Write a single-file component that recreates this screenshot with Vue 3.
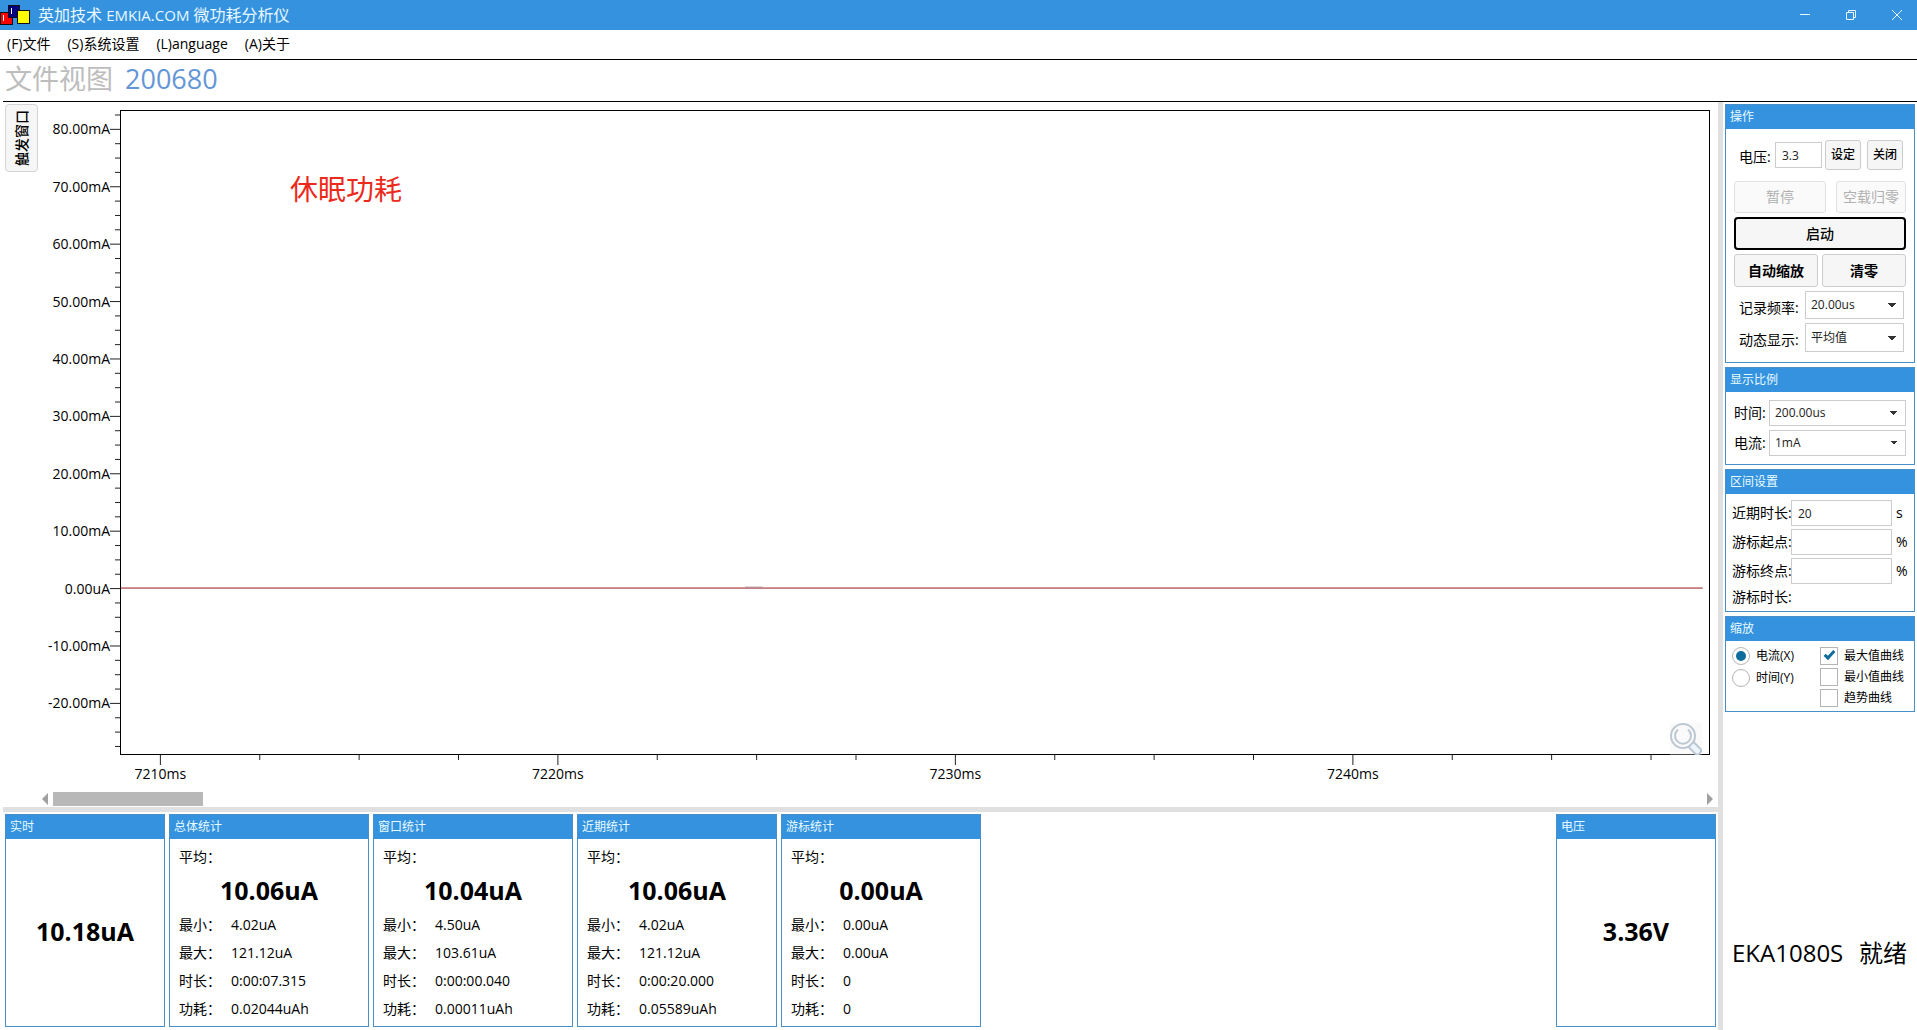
<script setup>
import { ref } from 'vue'

const plotTop = 3
const yStep = 8.9
const yLabels = [
  '80.00mA', '70.00mA', '60.00mA', '50.00mA', '40.00mA', '30.00mA',
  '20.00mA', '10.00mA', '0.00uA', '-10.00mA', '-20.00mA'
]
const yMajor = yLabels.map((label, i) => ({ label, pos: plotTop + i * yStep }))
const yMinor = []
for (let i = -1; i <= 43; i++) {
  if (i % 4 !== 0) yMinor.push(plotTop + (i * yStep) / 4)
}

const xStart = 2.54
const xStep = 6.25
const xMajor = ['7210ms', '7220ms', '7230ms', '7240ms'].map((label, i) => ({
  label,
  pos: xStart + i * xStep * 4
}))
const xMinor = []
for (let i = 1; i < 16; i++) {
  if (i % 4 !== 0) xMinor.push(xStart + i * xStep)
}

const stats = [
  { title: '总体统计', avg: '10.06uA', rows: [['最小：', '4.02uA'], ['最大：', '121.12uA'], ['时长：', '0:00:07.315'], ['功耗：', '0.02044uAh']] },
  { title: '窗口统计', avg: '10.04uA', rows: [['最小：', '4.50uA'], ['最大：', '103.61uA'], ['时长：', '0:00:00.040'], ['功耗：', '0.00011uAh']] },
  { title: '近期统计', avg: '10.06uA', rows: [['最小：', '4.02uA'], ['最大：', '121.12uA'], ['时长：', '0:00:20.000'], ['功耗：', '0.05589uAh']] },
  { title: '游标统计', avg: '0.00uA', rows: [['最小：', '0.00uA'], ['最大：', '0.00uA'], ['时长：', '0'], ['功耗：', '0']] }
]

const voltage = ref('3.3')
const recent = ref('20')
const cursorStart = ref('')
const cursorEnd = ref('')
const axis = ref('x')
const showMax = ref(true)
const showMin = ref(false)
const showTrend = ref(false)
</script>

<template>
  <div class="app">
    <header class="titlebar">
      <svg class="logo" width="31" height="30" viewBox="0 0 31 30">
        <g stroke="#101018" stroke-width="1">
          <rect x="0.5" y="12.5" width="12" height="12" fill="#f00" />
          <rect x="8.5" y="5.5" width="11" height="12" fill="#000080" />
          <rect x="17.5" y="10.5" width="12" height="13" fill="#ff0" />
        </g>
        <path d="M3.5 15v6M11.5 8v6" stroke="#fff" stroke-width="1" />
      </svg>
      <h1>英加技术 <span>EMKIA.COM</span> 微功耗分析仪</h1>
      <div class="winbtns">
        <button aria-label="最小化">
          <svg width="12" height="12" viewBox="0 0 12 12"><path d="M1 5.5h10" /></svg>
        </button>
        <button aria-label="还原">
          <svg width="12" height="12" viewBox="0 0 12 12"><path d="M1.500 3.500h7v7h-7zM3.500 3.500v-2h7v7h-2" /></svg>
        </button>
        <button aria-label="关闭窗口">
          <svg width="12" height="12" viewBox="0 0 12 12"><path d="M1 1l10 10M11 1L1 11" /></svg>
        </button>
      </div>
    </header>

    <nav class="menubar">
      <button>(F)文件</button>
      <button>(S)系统设置</button>
      <button>(L)anguage</button>
      <button>(A)关于</button>
    </nav>

    <div class="viewhead">
      <span>文件视图</span>
      <strong>200680</strong>
    </div>

    <div class="main">
      <div class="left">
        <section class="chart">
          <div class="yaxis">
            <button class="trigger"><span>触发窗口</span></button>
            <svg class="yscale">
              <g v-for="t in yMajor" :key="t.label">
                <text x="68" :y="t.pos + '%'" dy="5" text-anchor="end">{{ t.label }}</text>
                <line x1="68" x2="78" :y1="t.pos + '%'" :y2="t.pos + '%'" />
              </g>
              <line v-for="p in yMinor" :key="p" x1="73" x2="78" :y1="p + '%'" :y2="p + '%'" />
            </svg>
          </div>
          <div class="plot">
            <svg class="trace">
              <line x1="0" x2="99.6%" y1="74.2%" y2="74.2%" class="halo" />
              <line x1="0" x2="99.6%" y1="74.2%" y2="74.2%" class="curve" />
              <line x1="39.300%" x2="40.400%" y1="74.05%" y2="74.05%" class="bump" />
            </svg>
            <span class="note">休眠功耗</span>
            <button class="magnify" aria-label="放大">
              <svg width="32" height="32" viewBox="0 0 32 32" fill="none" stroke="#bcc8d4" stroke-width="2">
                <circle cx="13" cy="13" r="12" />
                <path d="M8 6.500a8 8 0 1 0 10 0" />
                <path d="M18.500 24l5-5 7 7c2 3-2.500 7-5 5z" fill="#eef4fc" />
              </svg>
            </button>
          </div>
          <svg class="xscale">
            <g v-for="t in xMajor" :key="t.label">
              <line :x1="t.pos + '%'" :x2="t.pos + '%'" y1="0" y2="10" />
              <text :x="t.pos + '%'" y="24" text-anchor="middle">{{ t.label }}</text>
            </g>
            <line v-for="p in xMinor" :key="p" :x1="p + '%'" :x2="p + '%'" y1="0" y2="5" />
          </svg>
          <div class="scroll">
            <button aria-label="向左滚动"><svg width="7" height="12" viewBox="0 0 7 12"><path d="M6 0v12L0 6z" /></svg></button>
            <div class="track"><div class="thumb"></div></div>
            <button aria-label="向右滚动"><svg width="7" height="12" viewBox="0 0 7 12"><path d="M0 0v12l6-6z" /></svg></button>
          </div>
        </section>

        <section class="readouts">
          <article class="box single">
            <h2>实时</h2>
            <p class="big">10.18uA</p>
          </article>
          <article v-for="s in stats" :key="s.title" class="box stat">
            <h2>{{ s.title }}</h2>
            <div class="statbody">
              <p class="avg">平均：</p>
              <p class="big">{{ s.avg }}</p>
              <table>
                <tbody>
                  <tr v-for="r in s.rows" :key="r[0]">
                    <th scope="row">{{ r[0] }}</th>
                    <td>{{ r[1] }}</td>
                  </tr>
                </tbody>
              </table>
            </div>
          </article>
          <article class="box single volt">
            <h2>电压</h2>
            <p class="big">3.36V</p>
          </article>
        </section>
      </div>

      <aside class="side">
        <section class="box">
          <h2>操作</h2>
          <div class="ops">
            <div class="row vrow">
              <label for="volt">电压:</label>
              <input id="volt" v-model="voltage" type="text" />
              <button class="btn small">设定</button>
              <button class="btn small off">关闭</button>
            </div>
            <div class="row pause">
              <button class="btn wide" disabled>暂停</button>
              <button class="btn" disabled>空载归零</button>
            </div>
            <button class="btn start">启动</button>
            <div class="row pair">
              <button class="btn">自动缩放</button>
              <button class="btn">清零</button>
            </div>
            <div class="row srow">
              <label for="freq">记录频率:</label>
              <select id="freq"><option>20.00us</option></select>
            </div>
            <div class="row srow">
              <label for="dyn">动态显示:</label>
              <select id="dyn"><option>平均值</option></select>
            </div>
          </div>
        </section>

        <section class="box">
          <h2>显示比例</h2>
          <div class="ratio">
            <div class="row">
              <label for="rt">时间:</label>
              <select id="rt"><option>200.00us</option></select>
            </div>
            <div class="row">
              <label for="rc">电流:</label>
              <select id="rc"><option>1mA</option></select>
            </div>
          </div>
        </section>

        <section class="box">
          <h2>区间设置</h2>
          <div class="range">
            <div class="row">
              <label for="recent">近期时长:</label>
              <input id="recent" v-model="recent" type="text" />
              <span>s</span>
            </div>
            <div class="row">
              <label for="cs">游标起点:</label>
              <input id="cs" v-model="cursorStart" type="text" />
              <span>%</span>
            </div>
            <div class="row">
              <label for="ce">游标终点:</label>
              <input id="ce" v-model="cursorEnd" type="text" />
              <span>%</span>
            </div>
            <p>游标时长:</p>
          </div>
        </section>

        <section class="box">
          <h2>缩放</h2>
          <div class="zoom">
            <div class="col radios">
              <label><input v-model="axis" type="radio" name="axis" value="x" />电流(X)</label>
              <label><input v-model="axis" type="radio" name="axis" value="y" />时间(Y)</label>
            </div>
            <div class="col checks">
              <label><input v-model="showMax" type="checkbox" />最大值曲线</label>
              <label><input v-model="showMin" type="checkbox" />最小值曲线</label>
              <label><input v-model="showTrend" type="checkbox" />趋势曲线</label>
            </div>
          </div>
        </section>

        <p class="status"><span>EKA1080S</span><span>就绪</span></p>
      </aside>
    </div>
  </div>
</template>

<style>
body {
  background: #fff;
}
</style>

<style scoped>
.app {
  display: flex;
  flex-direction: column;
  min-height: 100vh;
  color: #000;
  font: 14px/20px "Open Sans", "Noto Sans CJK SC", sans-serif;
}
.app *,
.app *::before {
  box-sizing: border-box;
}
h1, h2, p {
  margin: 0;
  font-weight: 400;
}
button, input, select {
  margin: 0;
  padding: 0;
  border: 0;
  background: none;
  color: inherit;
  font: inherit;
}

.titlebar {
  display: flex;
  align-items: center;
  height: 30px;
  background: #3492df;
  color: #e8f8ff;
}
.titlebar h1 {
  flex: 1;
  margin-left: 7px;
  font-size: 16px;
  line-height: 28px;
}
.titlebar h1 span {
  font-size: 15px;
}
.winbtns {
  display: flex;
  padding-right: 1px;
}
.winbtns button {
  display: flex;
  align-items: center;
  justify-content: center;
  width: 46px;
  height: 30px;
  padding-left: 8px;
}
.winbtns svg {
  fill: none;
  stroke: #e8f8ff;
  stroke-width: 1;
}

.menubar {
  display: flex;
  gap: 17px;
  height: 30px;
  padding: 0 7px 2px;
  border-bottom: 1px solid #000;
}

.viewhead {
  display: flex;
  gap: 12px;
  height: 42px;
  margin-left: 3px;
  padding-left: 2px;
  border-bottom: 1px solid #000;
  font-size: 27px;
  line-height: 38px;
  color: #bdbdbd;
}
.viewhead strong {
  font-weight: 400;
  color: #6496d6;
}

.main {
  flex: 1;
  display: flex;
  padding-left: 3px;
}
.left {
  flex: 1;
  display: flex;
  flex-direction: column;
  min-width: 0;
}

.chart {
  flex: 1;
  display: grid;
  grid-template-columns: 117px minmax(0, 1fr);
  grid-template-rows: minmax(400px, 1fr) 37px 15px;
  padding: 8px 8px 0 0;
  border-bottom: 5px solid #e0e0e0;
}
.yaxis {
  display: flex;
  justify-content: space-between;
  padding-left: 2px;
}
.trigger {
  display: flex;
  align-items: center;
  justify-content: center;
  width: 33px;
  height: 68px;
  margin-top: -6px;
  border: 1px solid #d4d4d4;
  border-radius: 4px;
  background: #f6f6f6;
  font-weight: 500;
}
.trigger span {
  writing-mode: vertical-rl;
  text-orientation: sideways;
  transform: rotate(180deg);
}
.yscale {
  width: 78px;
  height: 100%;
  overflow: visible;
}
.yscale line, .xscale line {
  stroke: #222;
  stroke-width: 1;
}
.plot {
  position: relative;
  border: 1px solid #000;
}
.trace {
  position: absolute;
  width: 100%;
  height: 100%;
}
.halo {
  stroke: #f4cccc;
  stroke-width: 2;
}
.curve {
  stroke: #a4484c;
  stroke-width: 1;
}
.bump {
  stroke: #b08a9c;
  stroke-width: 1;
}
.note {
  position: absolute;
  left: 169px;
  top: 58px;
  font-size: 28px;
  line-height: 40px;
  color: #ec2a1c;
}
.magnify {
  position: absolute;
  right: 7px;
  bottom: -1px;
  width: 32px;
  height: 32px;
  background: rgba(240, 240, 240, 0.3);
}
.magnify svg, .scroll svg {
  display: block;
}
.xscale {
  grid-column: 2;
  width: 100%;
  height: 37px;
}
.scroll {
  grid-column: 1 / -1;
  display: flex;
  align-items: center;
  height: 14px;
  margin: 0 -4px 0 39px;
  gap: 4px;
}
.scroll svg {
  fill: #a0a0a0;
}
.track {
  flex: 1;
}
.thumb {
  width: 150px;
  height: 14px;
  background: #b8b8b8;
}

.readouts {
  display: flex;
  gap: 4px;
  padding: 2px 2px 3px;
}
.box {
  border: 1px solid #4a90c8;
}
.box h2 {
  height: 24px;
  padding-left: 4px;
  background: #3492df;
  color: #e8fbff;
  font-size: 12px;
  line-height: 24px;
}
.single {
  display: flex;
  flex-direction: column;
  width: 160px;
}
.single .big {
  margin: auto;
  padding-bottom: 4px;
}
.volt {
  margin-left: auto;
}
.stat {
  width: 200px;
}
.statbody {
  padding: 8px 9px 3px;
}
.big {
  font-size: 25px;
  font-weight: 700;
  line-height: 32px;
  text-align: center;
}
.stat .big {
  margin: 7px 0 5px;
}
table {
  border-collapse: collapse;
}
tr {
  height: 28px;
}
th, td {
  padding: 0;
  text-align: left;
  font-weight: 400;
}
th {
  width: 52px;
}

.side {
  display: flex;
  flex-direction: column;
  gap: 4px;
  width: 199px;
  padding: 2px 2px 0;
  border-left: 5px solid #e0e0e0;
}
.row {
  display: flex;
  align-items: center;
}
.side input[type="text"], .side select {
  min-width: 0;
  height: 26px;
  border: 1px solid #ccc;
  background-color: #fff;
  font-size: 12px;
  color: #222;
}
.side input[type="text"] {
  padding-left: 6px;
}
.side select {
  flex: 1;
  appearance: none;
  padding-left: 5px;
  background-image:
    linear-gradient(to bottom right, #333 50%, transparent 50%),
    linear-gradient(to bottom left, #333 50%, transparent 50%);
  background-position: right 7px center, right 11px center;
  background-size: 4px 4px;
  background-repeat: no-repeat;
}
.side select {
  background-image:
    linear-gradient(to top right, transparent 50%, #333 50%),
    linear-gradient(to top left, transparent 50%, #333 50%);
  background-position: right 11px center, right 7px center;
}
.btn {
  height: 32px;
  border: 1px solid #ccc;
  border-radius: 3px;
  background: #f6f6f6;
  font-weight: 500;
}
.btn:disabled {
  border-color: #e2e2e2;
  background: #fafafa;
  color: #b0b0b0;
  font-weight: 400;
}
.btn.small {
  width: 36px;
  height: 30px;
  font-size: 12px;
}
.ops {
  display: flex;
  flex-direction: column;
  padding: 11px 8px 10px;
}
.vrow label {
  width: 41px;
  padding: 3px 0 0 5px;
}
.vrow input {
  width: 47px;
}
.vrow .small {
  margin-left: 3px;
}
.vrow .off {
  margin-left: 6px;
}
.pause {
  justify-content: space-between;
  margin: 11px 0 4px;
}
.pause .btn {
  width: 70px;
}
.pause .wide {
  width: 92px;
}
.btn.start {
  height: 33px;
  border: 2px solid #000;
  border-radius: 4px;
}
.pair {
  gap: 4px;
  margin-top: 4px;
}
.pair .btn {
  flex: 1;
  height: 33px;
  font-weight: 700;
}
.srow {
  margin-top: 4px;
  padding-right: 2px;
}
.srow label {
  width: 71px;
  padding: 5px 0 0 5px;
}
.side .srow select {
  height: 28px;
}
.side .srow #dyn {
  height: 29px;
}
.ratio {
  display: flex;
  flex-direction: column;
  gap: 4px;
  padding: 8px;
}
.ratio label {
  width: 35px;
}
.range {
  display: flex;
  flex-direction: column;
  gap: 3px;
  padding: 6px 5px 4px 6px;
}
.range label {
  width: 59px;
  white-space: nowrap;
}
.range input {
  flex: 1;
}
.range span {
  width: 17px;
  padding-left: 4px;
}
.zoom {
  display: flex;
  padding: 6px 6px 4px;
  font-size: 12px;
  line-height: 18px;
}
.col {
  display: flex;
  flex-direction: column;
  gap: 3px;
}
.radios {
  gap: 4px;
  width: 88px;
}
.col label {
  display: flex;
  gap: 6px;
  white-space: nowrap;
}
.col input {
  appearance: none;
  display: flex;
  align-items: center;
  justify-content: center;
  flex: none;
  width: 18px;
  height: 18px;
  border: 1px solid #b4b4b4;
  background: #fff;
}
.col input[type="radio"] {
  border-radius: 50%;
}
.col input[type="radio"]:checked::before {
  content: "";
  width: 10px;
  height: 10px;
  border-radius: 50%;
  background: #0f6c9c;
}
.col input[type="checkbox"]:checked::before {
  content: "";
  width: 11px;
  height: 6px;
  margin-bottom: 4px;
  border: solid #0f6c9c;
  border-width: 0 0 3px 3px;
  transform: rotate(-48deg);
}
.status {
  display: flex;
  justify-content: space-between;
  margin: auto 8px 61px 7px;
  font-size: 24px;
  line-height: 32px;
  white-space: nowrap;
}
</style>
